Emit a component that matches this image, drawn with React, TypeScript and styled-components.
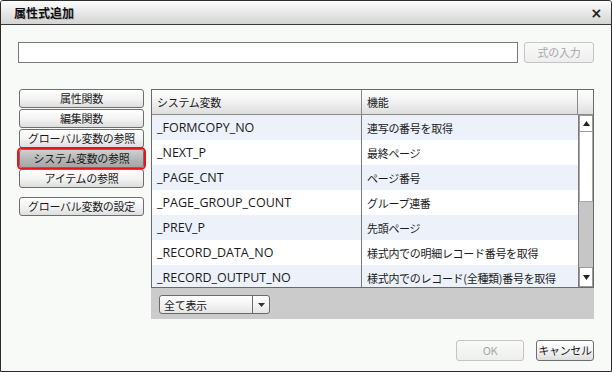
import styled, { createGlobalStyle } from 'styled-components';

const GlobalStyle = createGlobalStyle`
    html, body {
        margin : 0;
        padding : 0;
        background : #ffffff;
    }
    * {
        box-sizing : border-box;
    }
    body {
        font-family : "Noto Sans CJK JP", sans-serif;
        font-size : 11px;
        letter-spacing : -0.3px;
        color : #1a1a1a;
    }
`;

const Window = styled.div`
    width : 612px;
    height : 372px;
    border : 1px solid #2b2b2b;
    border-radius : 3px 3px 0 0;
    background : #f8faf8;
    display : flex;
    flex-direction : column;
    overflow : hidden;
`;

const TitleBar = styled.div`
    height : 24px;
    flex : none;
    display : flex;
    align-items : center;
    justify-content : space-between;
    padding : 0 9px 0 13px;
    background : linear-gradient(#fcfcfc, #e6e6e6 55%, #d4d4d4);
    border-bottom : 1px solid #3a3a3a;

    .title{
        font-weight : 700;
        font-size : 12px;
        letter-spacing : 0;
        color : #111;
        text-shadow : 1px 1px 0 rgba(0,0,0,0.18);
    }

    .close{
        font-family : "DejaVu Sans", sans-serif;
        font-weight : 700;
        font-size : 14px;
        color : #222;
        line-height : 1;
    }
`;

const Body = styled.div`
    flex : 1;
    display : flex;
    flex-direction : column;
    padding : 17px 17px 0 17px;
`;

const FormulaRow = styled.div`
    display : flex;
    gap : 6px;
    height : 21px;
`;

const FormulaInput = styled.input`
    flex : 1;
    height : 21px;
    border : 1px solid #7a7a7a;
    background : #fff;
    outline : none;
    padding : 0 4px;
    font : inherit;
`;

const Button = styled.button<{ $selected?: boolean; $disabled?: boolean; $width?: number }>`
    width : ${p => p.$width ? `${p.$width}px` : '100%'};
    height : ${p => p.$disabled || p.$width ? '21px' : '19px'};
    flex : none;
    padding : 0;
    font-family : "Noto Sans CJK JP", sans-serif;
    font-size : 11px;
    letter-spacing : -0.3px;
    white-space : nowrap;
    line-height : 1;
    color : ${p => p.$disabled ? '#a8a8a8' : '#1a1a1a'};
    border : 1px solid ${p => p.$disabled ? '#c4c4c4' : '#6e6e6e'};
    border-radius : 3px;
    background : ${p => p.$selected
        ? 'linear-gradient(#cfcfcf, #b4b4b4 60%, #a6a6a6)'
        : p.$disabled
            ? 'linear-gradient(#fafafa, #eeeeee)'
            : 'linear-gradient(#ffffff, #f2f2f2 55%, #dedede)'};
    box-shadow : ${p => p.$selected ? '0 0 0 2px #e8161b' : 'none'};
    outline : none;
`;

const Main = styled.div`
    display : flex;
    gap : 7px;
    margin-top : 26px;
    height : 230px;
`;

const SideMenu = styled.div`
    width : 126px;
    flex : none;
    display : flex;
    flex-direction : column;
    gap : 1px;
    padding-left : 1px;

    .spacer{
        height : 7px;
    }
`;

const TablePanel = styled.div`
    flex : 1;
    display : flex;
    flex-direction : column;
    background : #cbcbcb;
`;

const Grid = styled.div`
    border : 1px solid #6a6a6a;
    background : #fff;
    display : flex;
    flex-direction : column;
`;

const HeaderRow = styled.div`
    display : grid;
    grid-template-columns : 210px 216px 1fr;
    height : 25px;
    background : linear-gradient(#ffffff, #f1f1f1 50%, #dedede);
    border-bottom : 1px solid #8a8a8a;

    div{
        display : flex;
        align-items : center;
        padding-left : 5px;
        border-right : 1px solid #8a8a8a;
    }
    div:last-child{
        border-right : none;
    }
`;

const GridBody = styled.div`
    display : flex;
    height : 172px;
`;

const Rows = styled.div`
    flex : 1;
    overflow : hidden;
`;

const Row = styled.div<{ $odd: boolean }>`
    display : grid;
    grid-template-columns : 210px 1fr;
    height : 25px;
    background : ${p => p.$odd ? '#edf2fa' : '#ffffff'};
`;

const NameCell = styled.div`
    display : flex;
    align-items : center;
    padding-left : 5px;
    white-space : nowrap;
    border-right : 1px solid #7a7a7a;
    font-family : "Open Sans", sans-serif;
    font-size : 12.5px;
    letter-spacing : 0;
`;

const DescCell = styled.div`
    display : flex;
    align-items : center;
    padding-left : 5px;
    white-space : nowrap;
    overflow : hidden;
`;

const ScrollBar = styled.div`
    width : 15px;
    flex : none;
    border-left : 1px solid #7a7a7a;
    display : flex;
    flex-direction : column;
    background : #c6c6c6;

    .arrow{
        height : 17px;
        background : #fff;
        border : 1px solid #9a9a9a;
        display : flex;
        align-items : center;
        justify-content : center;
    }
    .thumb{
        height : 70px;
        background : #fff;
        border : 1px solid #a8a8a8;
        border-top : none;
    }
    .track{
        flex : 1;
    }
    .down{
        height : 20px;
    }
`;

const PanelFooter = styled.div`
    flex : 1;
    padding : 7px 0 0 8px;
`;

const Select = styled.div`
    width : 111px;
    height : 19px;
    display : flex;
    border : 1px solid #6a6a6a;
    border-radius : 3px;
    background : linear-gradient(#ffffff, #f3f3f3 55%, #e4e4e4);

    .label{
        flex : 1;
        display : flex;
        align-items : center;
        padding-left : 4px;
    }
    .caret{
        width : 17px;
        border-left : 1px solid #6a6a6a;
        display : flex;
        align-items : center;
        justify-content : center;
    }
`;

const Footer = styled.div`
    display : flex;
    justify-content : flex-end;
    gap : 12px;
    margin-top : 21px;
`;

const MENU = ['属性関数', '編集関数', 'グローバル変数の参照', 'システム変数の参照', 'アイテムの参照'];

const ROWS: [string, string][] = [
    ['_FORMCOPY_NO', '連写の番号を取得'],
    ['_NEXT_P', '最終ページ'],
    ['_PAGE_CNT', 'ページ番号'],
    ['_PAGE_GROUP_COUNT', 'グループ連番'],
    ['_PREV_P', '先頭ページ'],
    ['_RECORD_DATA_NO', '様式内での明細レコード番号を取得'],
    ['_RECORD_OUTPUT_NO', '様式内でのレコード(全種類)番号を取得'],
];

const Triangle = ({ up }: { up?: boolean }) => (
    <svg width="7" height="5" viewBox="0 0 7 5">
        <path d={up ? 'M0 5h7L3.5 0z' : 'M0 0h7L3.5 5z'} fill="#222" />
    </svg>
);

const App = () => {
    return (
        <>
            <GlobalStyle />
            <Window>
                <TitleBar>
                    <span className="title">属性式追加</span>
                    <span className="close">×</span>
                </TitleBar>
                <Body>
                    <FormulaRow>
                        <FormulaInput />
                        <Button $disabled $width={70}>式の入力</Button>
                    </FormulaRow>
                    <Main>
                        <SideMenu>
                            {MENU.map((m, i) => (
                                <Button key={m} $selected={i === 3}>{m}</Button>
                            ))}
                            <div className="spacer" />
                            <Button>グローバル変数の設定</Button>
                        </SideMenu>
                        <TablePanel>
                            <Grid>
                                <HeaderRow>
                                    <div>システム変数</div>
                                    <div>機能</div>
                                    <div />
                                </HeaderRow>
                                <GridBody>
                                    <Rows>
                                        {ROWS.map(([name, desc], i) => (
                                            <Row key={name} $odd={i % 2 === 0}>
                                                <NameCell>{name}</NameCell>
                                                <DescCell>{desc}</DescCell>
                                            </Row>
                                        ))}
                                    </Rows>
                                    <ScrollBar>
                                        <div className="arrow"><Triangle up /></div>
                                        <div className="thumb" />
                                        <div className="track" />
                                        <div className="arrow down"><Triangle /></div>
                                    </ScrollBar>
                                </GridBody>
                            </Grid>
                            <PanelFooter>
                                <Select>
                                    <span className="label">全て表示</span>
                                    <span className="caret">
                                        <svg width="7" height="4" viewBox="0 0 7 4"><path d="M0 0h7L3.5 4z" fill="#333" /></svg>
                                    </span>
                                </Select>
                            </PanelFooter>
                        </TablePanel>
                    </Main>
                    <Footer>
                        <Button $disabled $width={68}>OK</Button>
                        <Button $width={58}>キャンセル</Button>
                    </Footer>
                </Body>
            </Window>
        </>
    );
};

export default App;
